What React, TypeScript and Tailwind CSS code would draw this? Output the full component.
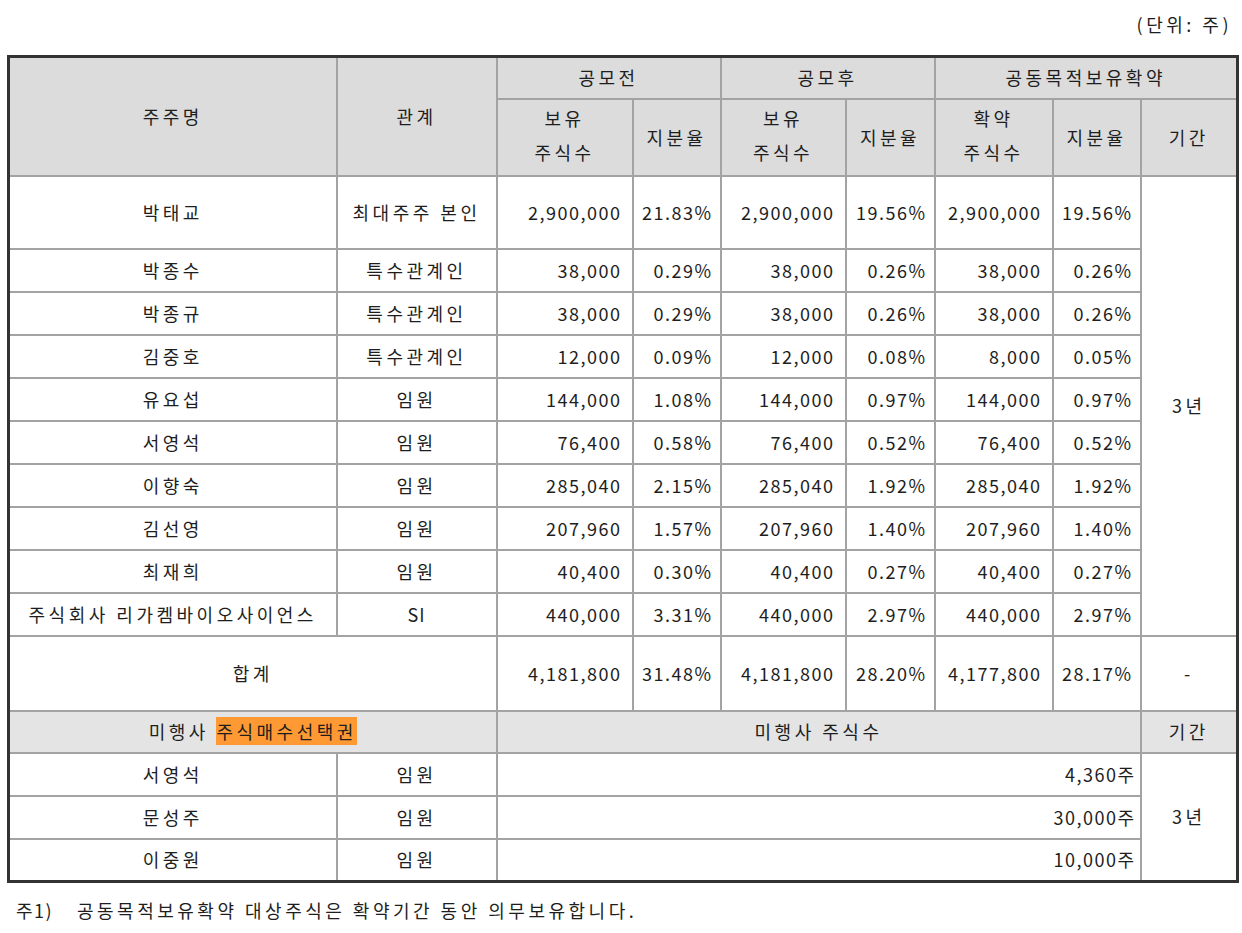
import React from 'react'

type Row = {
  name: string
  rel: string
  pre: string
  preR: string
  post: string
  postR: string
  lock: string
  lockR: string
}

const rows: Row[] = [
  { name: '박종수', rel: '특수관계인', pre: '38,000', preR: '0.29%', post: '38,000', postR: '0.26%', lock: '38,000', lockR: '0.26%' },
  { name: '박종규', rel: '특수관계인', pre: '38,000', preR: '0.29%', post: '38,000', postR: '0.26%', lock: '38,000', lockR: '0.26%' },
  { name: '김중호', rel: '특수관계인', pre: '12,000', preR: '0.09%', post: '12,000', postR: '0.08%', lock: '8,000', lockR: '0.05%' },
  { name: '유요섭', rel: '임원', pre: '144,000', preR: '1.08%', post: '144,000', postR: '0.97%', lock: '144,000', lockR: '0.97%' },
  { name: '서영석', rel: '임원', pre: '76,400', preR: '0.58%', post: '76,400', postR: '0.52%', lock: '76,400', lockR: '0.52%' },
  { name: '이향숙', rel: '임원', pre: '285,040', preR: '2.15%', post: '285,040', postR: '1.92%', lock: '285,040', lockR: '1.92%' },
  { name: '김선영', rel: '임원', pre: '207,960', preR: '1.57%', post: '207,960', postR: '1.40%', lock: '207,960', lockR: '1.40%' },
  { name: '최재희', rel: '임원', pre: '40,400', preR: '0.30%', post: '40,400', postR: '0.27%', lock: '40,400', lockR: '0.27%' },
  { name: '주식회사 리가켐바이오사이언스', rel: 'SI', pre: '440,000', preR: '3.31%', post: '440,000', postR: '2.97%', lock: '440,000', lockR: '2.97%' },
]

const options = [
  { name: '서영석', rel: '임원', qty: '4,360주' },
  { name: '문성주', rel: '임원', qty: '30,000주' },
  { name: '이중원', rel: '임원', qty: '10,000주' },
]

// Korean glyphs in this font are narrower than the source, so hangul cells get wider tracking
const cell = 'border-2 border-[#a3a3a3] p-0'
const head = cell + ' bg-[#dcdcdc] text-center font-normal tracking-[3.5px]'
const num = cell + ' text-right pr-[10px] tracking-[1.5px]'
const pct = cell + ' text-right pr-[7px] tracking-[1.5px]'
const mid = cell + ' text-center tracking-[3.5px]'

export default function App() {
  return (
    <div className="w-[1242px] min-h-[933px] bg-white text-[#1e1e1e] text-[18px] tracking-[3.5px] font-['Noto_Sans_CJK_KR',sans-serif]">
      <div className="h-[55px] flex items-center justify-end pr-[10px] pb-[6px]">(단위: 주)</div>

      <table className="ml-[7px] w-[1231px] table-fixed border-collapse border-[3px] border-[#333]">
        <colgroup>
          <col className="w-[328px]" />
          <col className="w-[160px]" />
          <col className="w-[136px]" />
          <col className="w-[88px]" />
          <col className="w-[125px]" />
          <col className="w-[89px]" />
          <col className="w-[118px]" />
          <col className="w-[88px]" />
          <col className="w-[97px]" />
        </colgroup>
        <thead>
          <tr className="h-[42px]">
            <th rowSpan={2} className={head}>주주명</th>
            <th rowSpan={2} className={head}>관계</th>
            <th colSpan={2} className={head}>공모전</th>
            <th colSpan={2} className={head}>공모후</th>
            <th colSpan={3} className={head}>공동목적보유확약</th>
          </tr>
          <tr className="h-[77px]">
            <th className={head + ' leading-[34px] pb-[4px]'}>보유<br />주식수</th>
            <th className={head}>지분율</th>
            <th className={head + ' leading-[34px] pb-[4px]'}>보유<br />주식수</th>
            <th className={head}>지분율</th>
            <th className={head + ' leading-[34px] pb-[4px]'}>확약<br />주식수</th>
            <th className={head}>지분율</th>
            <th className={head}>기간</th>
          </tr>
        </thead>
        <tbody>
          <tr className="h-[73px]">
            <td className={mid}>박태교</td>
            <td className={mid}>최대주주 본인</td>
            <td className={num}>2,900,000</td>
            <td className={pct}>21.83%</td>
            <td className={num}>2,900,000</td>
            <td className={pct}>19.56%</td>
            <td className={num}>2,900,000</td>
            <td className={pct}>19.56%</td>
            <td rowSpan={10} className={mid}>3년</td>
          </tr>
          {rows.map((r) => (
            <tr key={r.name} className="h-[43px]">
              <td className={mid}>{r.name}</td>
              <td className={r.rel === 'SI' ? cell + ' text-center tracking-[1px]' : mid}>{r.rel}</td>
              <td className={num}>{r.pre}</td>
              <td className={pct}>{r.preR}</td>
              <td className={num}>{r.post}</td>
              <td className={pct}>{r.postR}</td>
              <td className={num}>{r.lock}</td>
              <td className={pct}>{r.lockR}</td>
            </tr>
          ))}
          <tr className="h-[75px]">
            <td colSpan={2} className={mid}>합계</td>
            <td className={num}>4,181,800</td>
            <td className={pct}>31.48%</td>
            <td className={num}>4,181,800</td>
            <td className={pct}>28.20%</td>
            <td className={num}>4,177,800</td>
            <td className={pct}>28.17%</td>
            <td className={mid}>-</td>
          </tr>
          <tr className="h-[42px] bg-[#e4e4e4]">
            <td colSpan={2} className={mid}>
              미행사 <span className="bg-[#ff9933] py-[1px]">주식매수선택권</span>
            </td>
            <td colSpan={6} className={mid}>미행사 주식수</td>
            <td className={mid}>기간</td>
          </tr>
          {options.map((o, i) => (
            <tr key={o.name} className="h-[43px]">
              <td className={mid}>{o.name}</td>
              <td className={mid}>{o.rel}</td>
              <td colSpan={6} className={cell + ' text-right pr-[4px] tracking-[1.5px]'}>{o.qty}</td>
              {i === 0 && <td rowSpan={3} className={mid}>3년</td>}
            </tr>
          ))}
        </tbody>
      </table>

      <div className="flex pl-[16px] pt-[14px]">
        <span className="w-[61px] tracking-[1.5px]">주1)</span>
        <span>공동목적보유확약 대상주식은 확약기간 동안 의무보유합니다.</span>
      </div>
    </div>
  )
}
